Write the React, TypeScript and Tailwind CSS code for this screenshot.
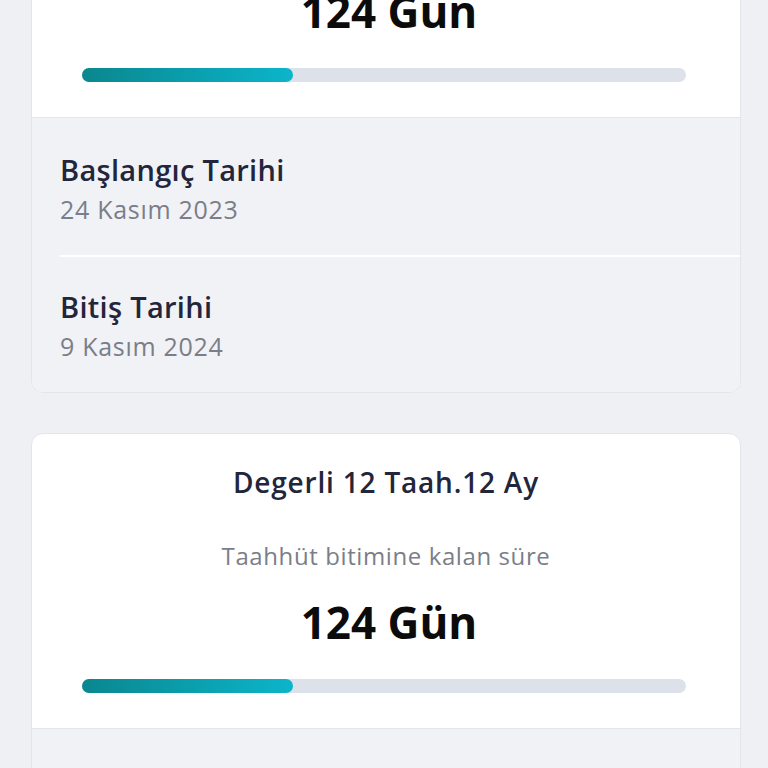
import React from "react";

type DateRow = { label: string; value: string };

const rows: DateRow[] = [
  { label: "Başlangıç Tarihi", value: "24 Kasım 2023" },
  { label: "Bitiş Tarihi", value: "9 Kasım 2024" },
];

function Progress({ percent }: { percent: number }) {
  return (
    <div className="ml-[50px] mr-[54px] h-[14px] rounded-full bg-[#dde1ea]">
      <div
        className="h-full rounded-full bg-gradient-to-r from-[#0a878f] to-[#0bb5ca]"
        style={{ width: `${percent}%` }}
      />
    </div>
  );
}

function PlanCard({ top = false }: { top?: boolean }) {
  return (
    <div className="overflow-hidden rounded-xl border border-[#e2e5eb] bg-white">
      <div className="pb-[35px] pt-[32px] text-center">
        <div className="text-[28px] font-semibold leading-[32px] tracking-[0.8px] text-[#23263b]">Degerli 12 Taah.12 Ay</div>
        <div className="mt-[42px] text-[24px] leading-[32px] tracking-[0.6px] text-[#7a7e88]">Taahhüt bitimine kalan süre</div>
        <div className="mt-[22px] pl-[6px] text-[44px] font-bold leading-[56px] text-[#0b0b0b]">124 Gün</div>
        <div className="mt-[29px]">
          <Progress percent={35} />
        </div>
      </div>
      <div className="border-t border-[#e2e5eb] bg-[#f0f2f6]">
        {top &&
          rows.map((r, i) => (
            <div key={r.label} className={i > 0 ? "ml-[28px] border-t-2 border-white" : "ml-[28px]"}>
              <div className={i > 0 ? "pb-[30px] pt-[32px]" : "pb-[30px] pt-[34px]"}>
                <div className="text-[29px] font-semibold leading-[36px] tracking-[0.3px] text-[#23263b]">{r.label}</div>
                <div className="mt-[5px] text-[25px] leading-[32px] tracking-[0.7px] text-[#7a7e88]">{r.value}</div>
              </div>
            </div>
          ))}
        {!top && <div className="h-[80px]" />}
      </div>
    </div>
  );
}

export default function App() {
  return (
    <div className="h-[768px] overflow-hidden bg-[#eef0f4] font-['Open_Sans',sans-serif]">
      <div className="ml-[31px] mr-[27px] mt-[-178px] flex flex-col gap-[40px]">
        <PlanCard top />
        <PlanCard />
      </div>
    </div>
  );
}
